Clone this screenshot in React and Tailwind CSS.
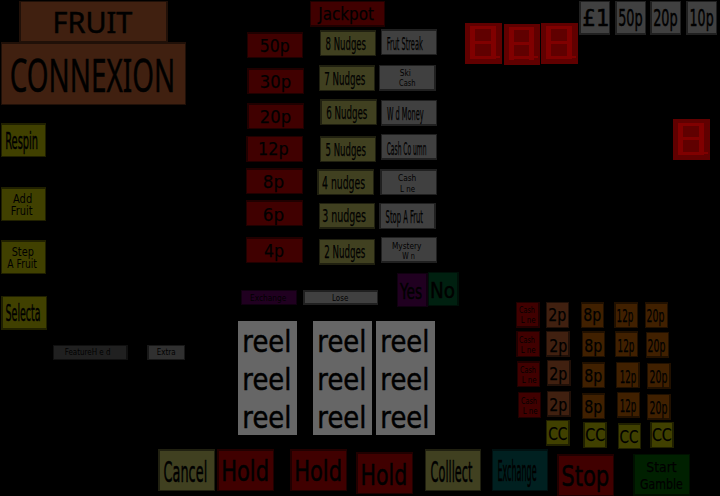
import React from "react";

const SANS = '"DejaVu Sans", sans-serif';
const SERIFED_I = '"Noto Sans", sans-serif';
const pen = document.createElement("canvas").getContext("2d");

// Stretches a caption so that its ink runs from x0 to x1 on the given baseline.
function Caption({ line, font = SANS }) {
  const [text, x0, x1, baseline, size] = line;
  pen.font = `${size}px ${font}`;
  const m = pen.measureText(text);
  const scale = (x1 - x0) / (m.actualBoundingBoxRight + m.actualBoundingBoxLeft);
  const left = x0 + m.actualBoundingBoxLeft * scale;
  const top = baseline - (size + m.fontBoundingBoxAscent - m.fontBoundingBoxDescent) / 2;
  return (
    <span
      className="absolute left-0 top-0 origin-top-left whitespace-pre text-black"
      style={{
        fontFamily: font,
        fontSize: size,
        lineHeight: `${size}px`,
        transform: `translate(${left}px, ${top}px) scaleX(${scale})`,
        WebkitTextStroke: size > 20 ? "0.5px black" : size > 12 ? "0.25px black" : undefined,
      }}
    >
      {text}
    </span>
  );
}

const tones = {
  red: ["bg-[#200000]", "bg-[#400000]"],
  olive: ["bg-[#202010]", "bg-[#404020]"],
  gray: ["bg-[#202020]", "bg-[#404040]"],
  dim: ["bg-[#101010]", "bg-[#202020]"],
  mid: ["bg-[#181818]", "bg-[#303030]"],
  brown: ["bg-[#201008]", "bg-[#402010]"],
  orange: ["bg-[#201000]", "bg-[#402000]"],
  yellow: ["bg-[#202000]", "bg-[#404000]"],
  purple: ["bg-[#100010]", "bg-[#200020]"],
  jade: ["bg-[#001008]", "bg-[#002010]"],
  green: ["bg-[#001000]", "bg-[#002000]"],
  teal: ["bg-[#001010]", "bg-[#002020]"],
};

function Lamp({ tone, at, pad = "p-px", lines, font }) {
  const [edge, face] = tones[tone];
  return (
    <div className={`absolute flex ${at} ${pad} ${edge}`}>
      <div className={`grow ${face}`} />
      {lines.map((l) => (
        <Caption key={l[0]} line={l} font={font} />
      ))}
    </div>
  );
}

const TL = "p-px pt-[2px] pl-[2px]";
const T = "p-px pt-[2px]";
const L = "p-px pl-[2px]";
const LB = "p-px pl-[2px] pb-[2px]";
const R = "p-px pr-[2px]";
const B = "p-px pb-[2px]";
const RB = "p-px pr-[2px] pb-[2px]";

const lamps = [
  ["brown", "left-[19px] top-[1px] w-[149px] h-[41px]", "px-[2px] py-px", [["FRUIT", 35.5, 114, 32.3, 29.4]], SERIFED_I],
  ["brown", "left-[1px] top-[42px] w-[185px] h-[63px]", T, [["CONNEXION", 10, 171.7, 49.7, 46]], SERIFED_I],
  ["yellow", "left-[1px] top-[123px] w-[45px] h-[34px]", T, [["Respin", 5, 36.3, 27, 23.7]]],
  ["yellow", "left-[1px] top-[187px] w-[45px] h-[34px]", T, [["Add", 12, 30.7, 15.7, 12], ["Fruit", 10.7, 32, 29, 11.5]]],
  ["yellow", "left-[1px] top-[240px] w-[45px] h-[34px]", T, [["Step", 10.7, 32.3, 15.7, 12], ["A Fruit", 6.3, 36.3, 29, 11.5]]],
  ["yellow", "left-[1px] top-[296px] w-[46px] h-[34px]", LB, [["Selecta", 5, 39, 25.3, 23.5]]],
  ["dim", "left-[53px] top-[345px] w-[75px] h-[15px]", R, [["FeatureH e d", 11.7, 57, 10.3, 8.7]]],
  ["mid", "left-[147px] top-[345px] w-[38px] h-[15px]", L, [["Extra", 9.7, 28.3, 10.3, 8.7]]],

  ["red", "left-[310px] top-[1px] w-[75px] h-[26px]", B, [["Jackpot", 7.3, 64, 19.7, 17.5]]],
  ["red", "left-[247px] top-[32px] w-[56px] h-[26px]", T, [["50p", 13.7, 42.3, 20.7, 18]]],
  ["red", "left-[247px] top-[68px] w-[57px] h-[26px]", TL, [["30p", 13.7, 43.7, 20, 18]]],
  ["red", "left-[247px] top-[103px] w-[57px] h-[26px]", TL, [["20p", 13.7, 43.7, 20.7, 18]]],
  ["red", "left-[246px] top-[136px] w-[57px] h-[26px]", L, [["12p", 13, 42.3, 19.7, 18]]],
  ["red", "left-[246px] top-[168px] w-[57px] h-[26px]", T, [["8p", 17.7, 37.7, 20.7, 18]]],
  ["red", "left-[246px] top-[200px] w-[57px] h-[26px]", T, [["6p", 17.7, 37.7, 21, 18]]],
  ["red", "left-[246px] top-[237px] w-[57px] h-[26px]", T, [["4p", 18, 37.7, 20.3, 18]]],

  ["olive", "left-[320px] top-[30px] w-[56px] h-[26px]", T, [["8 Nudges", 6, 46, 20.7, 17.5]]],
  ["olive", "left-[319px] top-[65px] w-[56px] h-[26px]", T, [["7 Nudges", 5.7, 46.3, 20.3, 17.5]]],
  ["olive", "left-[320px] top-[99px] w-[57px] h-[26px]", TL, [["6 Nudges", 6.7, 47.3, 21, 17.5]]],
  ["olive", "left-[320px] top-[136px] w-[56px] h-[26px]", T, [["5 Nudges", 6, 46, 20.7, 17.5]]],
  ["olive", "left-[317px] top-[169px] w-[57px] h-[26px]", TL, [["4 nudges", 5, 48, 21, 17.5]]],
  ["olive", "left-[319px] top-[203px] w-[56px] h-[26px]", B, [["3 nudges", 3.7, 47, 20, 17.5]]],
  ["olive", "left-[319px] top-[239px] w-[56px] h-[26px]", B, [["2 Nudges", 5.7, 46.3, 20, 17.5]]],

  ["gray", "left-[381px] top-[29px] w-[56px] h-[26px]", T, [["Frut Streak", 6, 42, 21, 18]]],
  ["gray", "left-[379px] top-[65px] w-[57px] h-[26px]", RB, [["Ski", 20.7, 31.3, 11, 9.5], ["Cash", 20, 36, 21.3, 9]]],
  ["gray", "left-[381px] top-[100px] w-[56px] h-[26px]", B, [["W d Money", 6, 42.7, 20.7, 18]]],
  ["gray", "left-[381px] top-[134px] w-[56px] h-[26px]", B, [["Cash Co umn", 6, 45, 21, 18]]],
  ["gray", "left-[380px] top-[169px] w-[57px] h-[26px]", TL, [["Cash", 18, 36.3, 12.3, 9.5], ["L ne", 20, 35.3, 22.7, 9.3]]],
  ["gray", "left-[379px] top-[203px] w-[57px] h-[26px]", "p-px px-[2px]", [["Stop A Frut", 7, 44, 20.3, 18]]],
  ["gray", "left-[381px] top-[237px] w-[56px] h-[26px]", B, [["Mystery", 11, 40.7, 12, 9.5], ["W n", 21.3, 34, 22.3, 9.3]]],

  ["purple", "left-[241px] top-[290px] w-[56px] h-[15px]", "p-px", [["Exchange", 9, 45, 11.3, 8.7]]],
  ["gray", "left-[303px] top-[290px] w-[75px] h-[15px]", "p-[2px] pr-px", [["Lose", 29, 45, 11.3, 8.7]]],
  ["purple", "left-[397px] top-[273px] w-[31px] h-[34px]", R, [["Yes", 2.3, 25, 26, 21.5]]],
  ["jade", "left-[428px] top-[272px] w-[31px] h-[34px]", R, [["No", 3.7, 26, 26.3, 21.5]]],

  ["gray", "left-[579px] top-[1px] w-[31px] h-[34px]", LB, [["£1", 4.3, 29, 25.7, 23]]],
  ["gray", "left-[615px] top-[1px] w-[31px] h-[34px]", LB, [["50p", 3.7, 27.3, 25.7, 23]]],
  ["gray", "left-[650px] top-[1px] w-[31px] h-[34px]", LB, [["20p", 3.7, 27.3, 25.7, 23]]],
  ["gray", "left-[686px] top-[1px] w-[31px] h-[34px]", LB, [["10p", 4.7, 27.3, 25.7, 23]]],

  ["red", "left-[516px] top-[302px] w-[24px] h-[26px]", RB, [["Cash", 3, 18.3, 11, 9], ["L ne", 4.7, 20, 21, 9]]],
  ["red", "left-[516px] top-[331px] w-[24px] h-[26px]", L, [["Cash", 3, 18.3, 12, 9], ["L ne", 4.7, 20, 22, 9]]],
  ["red", "left-[517px] top-[361px] w-[23px] h-[26px]", T, [["Cash", 3, 18.3, 12, 9], ["L ne", 4.7, 20, 22, 9]]],
  ["red", "left-[518px] top-[392px] w-[23px] h-[26px]", "p-px", [["Cash", 3, 18.3, 12, 9], ["L ne", 4.7, 20, 22, 9]]],
  ["brown", "left-[546px] top-[302px] w-[23px] h-[26px]", "p-px", [["2p", 3, 20, 19.7, 18]]],
  ["brown", "left-[546px] top-[331px] w-[24px] h-[26px]", RB, [["2p", 4, 21, 21, 18]]],
  ["brown", "left-[547px] top-[360px] w-[24px] h-[26px]", RB, [["2p", 3, 20, 20.7, 18]]],
  ["brown", "left-[547px] top-[391px] w-[24px] h-[26px]", RB, [["2p", 3, 20, 20, 18]]],
  ["orange", "left-[581px] top-[302px] w-[23px] h-[26px]", T, [["8p", 3, 20, 19.7, 18]]],
  ["orange", "left-[582px] top-[331px] w-[23px] h-[26px]", T, [["8p", 3, 20, 21, 18]]],
  ["orange", "left-[582px] top-[362px] w-[23px] h-[26px]", T, [["8p", 3, 20, 20.7, 18]]],
  ["orange", "left-[582px] top-[393px] w-[23px] h-[26px]", T, [["8p", 3, 20, 20.3, 18]]],
  ["orange", "left-[614px] top-[302px] w-[24px] h-[26px]", TL, [["12p", 3, 19, 20.7, 17]]],
  ["orange", "left-[615px] top-[331px] w-[23px] h-[26px]", T, [["12p", 3, 19, 21, 17]]],
  ["orange", "left-[616px] top-[362px] w-[24px] h-[26px]", R, [["12p", 4.3, 20, 21, 17]]],
  ["orange", "left-[617px] top-[392px] w-[23px] h-[26px]", B, [["12p", 3.3, 19, 20.7, 17]]],
  ["orange", "left-[645px] top-[302px] w-[23px] h-[26px]", T, [["20p", 2, 19, 20.7, 17]]],
  ["orange", "left-[646px] top-[332px] w-[23px] h-[26px]", B, [["20p", 2, 19, 20.3, 17]]],
  ["orange", "left-[647px] top-[363px] w-[24px] h-[26px]", RB, [["20p", 3, 20, 20.3, 17]]],
  ["orange", "left-[647px] top-[394px] w-[24px] h-[26px]", RB, [["20p", 3, 20, 20.3, 17]]],
  ["yellow", "left-[546px] top-[420px] w-[24px] h-[26px]", RB, [["CC", 3, 21, 20.3, 18]]],
  ["yellow", "left-[583px] top-[422px] w-[24px] h-[26px]", "p-px px-[2px]", [["CC", 3, 21.7, 19.7, 18]]],
  ["yellow", "left-[618px] top-[423px] w-[23px] h-[26px]", T, [["CC", 2.3, 20, 20.7, 18]]],
  ["yellow", "left-[650px] top-[422px] w-[24px] h-[26px]", "p-px px-[2px]", [["CC", 2.7, 21.3, 19.7, 18]]],

  ["olive", "left-[158px] top-[449px] w-[57px] h-[42px]", TL, [["Cancel", 6, 48.3, 33, 29]]],
  ["red", "left-[217px] top-[449px] w-[57px] h-[42px]", TL, [["Hold", 5.7, 50.7, 32.7, 28]]],
  ["red", "left-[290px] top-[449px] w-[57px] h-[42px]", TL, [["Hold", 5.7, 50.7, 32.7, 28]]],
  ["red", "left-[356px] top-[452px] w-[57px] h-[42px]", TL, [["Hold", 6, 50, 33, 28]]],
  ["olive", "left-[425px] top-[449px] w-[56px] h-[42px]", T, [["Colllect", 6, 47.3, 33, 29]]],
  ["teal", "left-[492px] top-[449px] w-[56px] h-[42px]", T, [["Exchange", 6, 44.3, 32.7, 28]]],
  ["red", "left-[557px] top-[454px] w-[57px] h-[42px]", TL, [["Stop", 5, 51.7, 32, 28]]],
  ["green", "left-[633px] top-[454px] w-[57px] h-[42px]", "p-px pl-[2px] pb-[2px]", [["Start", 13.3, 44, 18, 14.5], ["Gamble", 7, 49.3, 35.3, 14]]],
];

const reels = ["left-[238px]", "left-[313px]", "left-[376px]"];

const FULL = "M5 3H31V33H35V35H31V36H5ZM10 6V18H26V6ZM10 21V33H26V21Z";
const NOTCHED = "M5 3H30V32H34V34H30V36H25V35H10V36H5ZM10 6V18H25V6ZM10 21V32H25V21Z";
const LOWER = "M5 4H31V33H35V35H31V36H5ZM10 7V18H26V7ZM10 21V33H26V21Z";

const digits = [
  ["left-[465px] top-[23px] w-[37px]", FULL],
  ["left-[504px] top-[24px] w-[36px]", NOTCHED],
  ["left-[541px] top-[23px] w-[37px]", FULL],
  ["left-[673px] top-[119px] w-[37px]", LOWER],
];

function Digit({ at, segments }) {
  return (
    <div className={`absolute h-[41px] bg-[#600000] ${at}`}>
      <svg className="block" width="36" height="41" shapeRendering="crispEdges" fill="#800000">
        <path fillRule="evenodd" d={segments} />
      </svg>
    </div>
  );
}

export default function App() {
  return (
    <main className="relative h-[496px] w-[720px] overflow-hidden bg-black">
      {lamps.map(([tone, at, pad, lines, font]) => (
        <Lamp key={at} tone={tone} at={at} pad={pad} lines={lines} font={font} />
      ))}
      {reels.map((x) => (
        <div key={x} className={`absolute top-[321px] h-[114px] w-[59px] bg-[#666666] ${x}`}>
          {[31, 69, 107].map((y) => (
            <Caption key={y} line={["reel", 6, 51.3, y, 31]} />
          ))}
        </div>
      ))}
      {digits.map(([at, segments]) => (
        <Digit key={at} at={at} segments={segments} />
      ))}
    </main>
  );
}
